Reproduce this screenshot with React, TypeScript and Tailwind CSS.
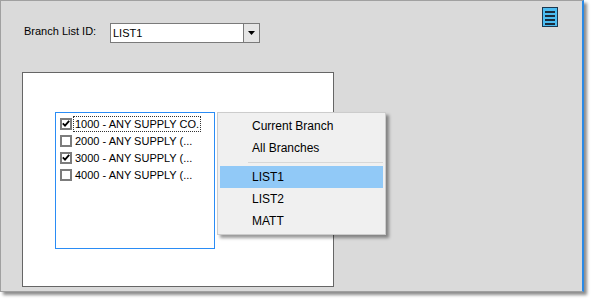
import React from 'react';

const branches = [
  { label: '1000 - ANY SUPPLY CO.', checked: true, focused: true },
  { label: '2000 - ANY SUPPLY (...', checked: false },
  { label: '3000 - ANY SUPPLY (...', checked: true },
  { label: '4000 - ANY SUPPLY (...', checked: false },
];

const CheckBox: React.FC<{ checked: boolean }> = ({ checked }) => (
  <span className="flex h-[12px] w-[12px] shrink-0 items-center justify-center border-2 border-[#7c7c7c] bg-white">
    {checked && (
      <svg width="8" height="7" viewBox="0 0 8 7">
        <path d="M0.8 3.4 L3 5.6 L7.2 0.8" fill="none" stroke="#000" strokeWidth="1.8" />
      </svg>
    )}
  </span>
);

const MenuIcon = () => (
  <svg width="16" height="20" viewBox="0 0 16 20" className="ml-auto shrink-0">
    <rect x="0.5" y="0.5" width="15" height="19" fill="#4cbdf2" stroke="#1d3850" />
    <rect x="3" y="4" width="10" height="2" fill="#1b2c3c" />
    <rect x="3" y="8" width="10" height="2" fill="#1b2c3c" />
    <rect x="3" y="12" width="10" height="2" fill="#1b2c3c" />
    <rect x="3" y="16" width="10" height="2" fill="#1b2c3c" />
  </svg>
);

const MenuItem: React.FC<{ label: string; active?: boolean }> = ({ label, active }) => (
  <div className={`flex h-[22px] items-center pl-[32px] text-[12px] ${active ? 'bg-[#91c9f7]' : ''}`}>
    {label}
  </div>
);

export default function App() {
  return (
    <div className="h-[299px] w-[591px] bg-white font-['Liberation_Sans',Arial,sans-serif] text-black">
      <div className="relative flex h-[292px] w-[584px] flex-col border-b border-l border-t border-r-2 border-[#a0a0a0] border-r-[#2a8ae6] bg-[#dadada] shadow-[3px_3px_3px_rgba(0,0,0,0.45)]">
        {/* header row */}
        <div className="flex items-start pr-[24px] pt-[6px]">
          <div className="ml-[23px] mt-[16px] flex items-start">
            <span className="mt-[2px] w-[86px] text-[11px] leading-[13px]">Branch List ID:</span>
            <div className="flex h-[20px] w-[150px] border border-[#7a7a7a] bg-white">
              <span className="flex-1 pl-[2px] text-[11px] leading-[18px]">LIST1</span>
              <span className="flex w-[16px] items-center justify-center border-l border-[#7a7a7a] bg-[#e5e5e5]">
                <svg width="7" height="4" viewBox="0 0 7 4">
                  <path d="M0 0 H7 L3.5 4 Z" fill="#000" />
                </svg>
              </span>
            </div>
          </div>
          <MenuIcon />
        </div>

        {/* white panel */}
        <div className="ml-[21px] mt-[29px] h-[215px] w-[312px] border border-[#666666] bg-white">
          <div className="ml-[32px] mt-[39px] h-[137px] w-[160px] border border-[#2a8cf5] pl-[4px] pt-[2px]">
            {branches.map((b) => (
              <div key={b.label} className="flex h-[17px] items-center">
                <CheckBox checked={b.checked} />
                <span
                  className={`ml-[1px] whitespace-nowrap px-[1px] text-[11px] leading-[14px] ${
                    b.focused ? 'border border-dotted border-[#333]' : 'border border-transparent'
                  }`}
                >
                  {b.label}
                </span>
              </div>
            ))}
          </div>
        </div>

        {/* context menu */}
        <div className="absolute left-[216px] top-[111px] h-[123px] w-[169px] border border-[#cccccc] bg-[#f0f0f0] p-[2px] shadow-[3px_3px_3px_rgba(0,0,0,0.4)]">
          <MenuItem label="Current Branch" />
          <MenuItem label="All Branches" />
          <div className="flex h-[7px] items-center pl-[28px]">
            <div className="h-px w-full bg-[#d7d7d7]" />
          </div>
          <MenuItem label="LIST1" active />
          <MenuItem label="LIST2" />
          <MenuItem label="MATT" />
        </div>
      </div>
    </div>
  );
}
